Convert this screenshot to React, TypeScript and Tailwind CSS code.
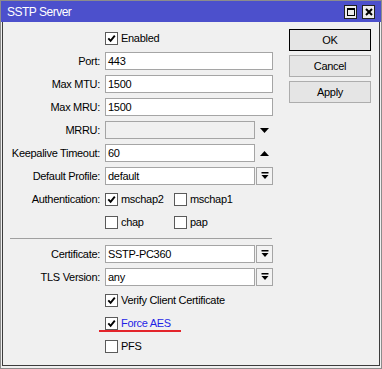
import React from "react";

const font = { fontFamily: '"Liberation Sans", Arial, sans-serif' };

function Box({ checked }: { checked?: boolean }) {
  return (
    <span className="w-[13px] h-[13px] bg-white border border-[#5a5a5a] flex items-center justify-center shrink-0">
      {checked && (
        <svg width="9" height="9" viewBox="0 0 9 9">
          <path d="M1.3 4.3 L3.6 6.8 L7.8 1.6" stroke="black" strokeWidth="1.9" fill="none" />
        </svg>
      )}
    </span>
  );
}

function Row({ label, children }: { label?: string; children?: React.ReactNode }) {
  return (
    <div className="flex items-center h-[18px] gap-[5px]">
      <div className="w-[97px] text-right whitespace-nowrap">{label}</div>
      {children}
    </div>
  );
}

function Input({ value, w, disabled }: { value?: string; w: string; disabled?: boolean }) {
  return (
    <div
      className={`${w} h-[18px] border border-[#a5a5a5] flex items-center px-[2px] ${
        disabled ? "bg-[#f0f0f0]" : "bg-white"
      }`}
    >
      {value}
    </div>
  );
}

function DropBtn() {
  return (
    <div className="w-[17px] h-[18px] border border-[#a5a5a5] bg-[#f3f3f3] flex items-center justify-center ml-[-4px]">
      <svg width="8" height="8" viewBox="0 0 8 8">
        <rect x="0.5" y="0" width="7" height="1.5" fill="black" />
        <path d="M0.5 3 L7.5 3 L4 7 Z" fill="black" />
      </svg>
    </div>
  );
}

function Check({ checked, label, blue }: { checked?: boolean; label: string; blue?: boolean }) {
  return (
    <div className="flex items-center gap-[3px]">
      <Box checked={checked} />
      <span className={blue ? "text-[#1f1fe6]" : ""}>{label}</span>
    </div>
  );
}

export default function App() {
  return (
    <div
      className="relative w-[382px] h-[369px] bg-[#f0f0f0] border border-[#8c8c8c] flex flex-col text-[11px] tracking-[-0.3px] text-black"
      style={font}
    >
      <div className="h-[21px] bg-[#4c50cc] flex items-center pl-[6px] pr-[6px] shrink-0">
        <span className="text-white text-[12px] tracking-[-0.5px] flex-1">SSTP Server</span>
        <div className="flex items-center gap-[5px]">
          <div className="w-[13px] h-[14px] bg-[#ececec] border border-[#222] flex items-center justify-center">
            <div className="w-[8px] h-[8px] border border-black border-t-2" />
          </div>
          <div className="w-[13px] h-[14px] bg-[#ececec] border border-[#222] flex items-center justify-center">
            <svg width="8" height="8" viewBox="0 0 8 8">
              <path d="M1 1 L7 7 M7 1 L1 7" stroke="black" strokeWidth="2" />
            </svg>
          </div>
        </div>
      </div>
      <div className="flex-1 mx-[1px] mb-[2px] border-x border-b border-[#3c3c3c] flex pt-[7px]">
        <div className="flex flex-col gap-[5px] w-[270px]">
          <Row>
            <Check checked label="Enabled" />
          </Row>
          <Row label="Port:">
            <Input w="w-[168px]" value="443" />
          </Row>
          <Row label="Max MTU:">
            <Input w="w-[168px]" value="1500" />
          </Row>
          <Row label="Max MRU:">
            <Input w="w-[168px]" value="1500" />
          </Row>
          <Row label="MRRU:">
            <Input w="w-[150px]" disabled />
            <div className="w-[17px] flex justify-center ml-[-4px]">
              <svg width="9" height="5" viewBox="0 0 9 5">
                <path d="M0 0 L9 0 L4.5 5 Z" fill="black" />
              </svg>
            </div>
          </Row>
          <Row label="Keepalive Timeout:">
            <Input w="w-[150px]" value="60" />
            <div className="w-[17px] flex justify-center ml-[-4px]">
              <svg width="9" height="5" viewBox="0 0 9 5">
                <path d="M0 5 L9 5 L4.5 0 Z" fill="black" />
              </svg>
            </div>
          </Row>
          <Row label="Default Profile:">
            <Input w="w-[150px]" value="default" />
            <DropBtn />
          </Row>
          <Row label="Authentication:">
            <div className="w-[69px]">
              <Check checked label="mschap2" />
            </div>
            <div className="ml-[-5px]">
              <Check label="mschap1" />
            </div>
          </Row>
          <Row>
            <div className="w-[69px]">
              <Check label="chap" />
            </div>
            <div className="ml-[-5px]">
              <Check label="pap" />
            </div>
          </Row>
          <div className="ml-[7px] w-[262px] h-[1px] bg-[#a0a0a0] mt-[2px] mb-[1px]" />
          <Row label="Certificate:">
            <Input w="w-[150px]" value="SSTP-PC360" />
            <DropBtn />
          </Row>
          <Row label="TLS Version:">
            <Input w="w-[150px]" value="any" />
            <DropBtn />
          </Row>
          <Row>
            <Check checked label="Verify Client Certificate" />
          </Row>
          <Row>
            <Check checked blue label="Force AES" />
          </Row>
          <Row>
            <Check label="PFS" />
          </Row>
        </div>
        <div className="ml-[16px] flex flex-col gap-[4px]">
          <div className="w-[82px] h-[22px] border border-black bg-[#e5e5e5] flex items-center justify-center">OK</div>
          <div className="w-[82px] h-[22px] border border-[#adadad] bg-[#e5e5e5] flex items-center justify-center">Cancel</div>
          <div className="w-[82px] h-[22px] border border-[#adadad] bg-[#e5e5e5] flex items-center justify-center">Apply</div>
        </div>
      </div>
      <div className="absolute left-[98px] top-[329px] w-[82px] h-[2px] bg-[#e3242b]" />
    </div>
  );
}
